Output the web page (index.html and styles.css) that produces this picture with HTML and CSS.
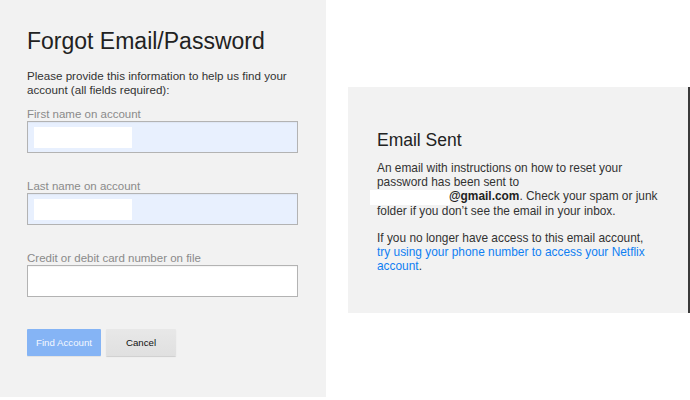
FILE: index.html
```html
<!DOCTYPE html>
<html>
<head>
<meta charset="utf-8">
<link rel="stylesheet" href="styles.css">
</head>
<body>
<div class="page">
  <section class="left">
    <h1 class="title">Forgot Email/Password</h1>
    <p class="intro">Please provide this information to help us find your account (all fields required):</p>
    <div class="field">
      <div class="label">First name on account</div>
      <div class="input filled"><span class="mask"></span></div>
    </div>
    <div class="field">
      <div class="label">Last name on account</div>
      <div class="input filled"><span class="mask"></span></div>
    </div>
    <div class="field">
      <div class="label">Credit or debit card number on file</div>
      <div class="input"></div>
    </div>
    <div class="buttons">
      <div class="btn primary">Find Account</div>
      <div class="btn secondary">Cancel</div>
    </div>
  </section>
  <div class="right">
    <section class="card">
      <h2 class="card-title">Email Sent</h2>
      <p class="msg">An email with instructions on how to reset your password has been sent to<br><span class="mask-inline"></span><b>@gmail.com</b>. Check your spam or junk folder if you don’t see the email in your inbox.</p>
      <p class="msg">If you no longer have access to this email account,<br><a class="link" href="#">try using your phone number to access your Netflix account</a>.</p>
    </section>
  </div>
</div>
</body>
</html>
```

FILE: styles.css
```css
html, body {
  margin: 0;
  padding: 0;
  background: #ffffff;
}
body {
  font-family: "Liberation Sans", Arial, Helvetica, sans-serif;
  color: #333333;
}
.page {
  display: flex;
  align-items: flex-start;
}
.left {
  width: 326px;
  height: 397px;
  box-sizing: border-box;
  background: #f2f2f2;
  padding: 27px 0 0 27px;
}
.title {
  margin: 0;
  font-size: 23px;
  line-height: 28px;
  font-weight: normal;
  color: #222222;
}
.intro {
  width: 271px;
  margin: 14px 0 10px 0;
  font-size: 11.6px;
  line-height: 14px;
  color: #333333;
}
.field {
  margin-bottom: 26px;
}
.label {
  font-size: 11.5px;
  line-height: 14px;
  color: #8a8a8a;
}
.input {
  width: 271px;
  height: 32px;
  box-sizing: border-box;
  background: #ffffff;
  border: 1px solid #b3b3b3;
  box-shadow: inset 0 1px 1px rgba(0,0,0,0.04);
  padding: 5px 6px;
}
.input.filled {
  background: #e8f0fe;
}
.mask {
  display: block;
  width: 98px;
  height: 21px;
  background: #ffffff;
}
.buttons {
  display: flex;
  gap: 5px;
  margin-top: 32px;
}
.btn {
  height: 27px;
  box-sizing: border-box;
  display: flex;
  align-items: center;
  justify-content: center;
  font-size: 9.7px;
  border-radius: 1px;
}
.btn.primary {
  width: 74px;
  background: #85b4f5;
  color: #f4f8ff;
  box-shadow: 0 1px 0 rgba(0,0,0,0.06);
}
.btn.secondary {
  width: 70px;
  background: linear-gradient(#e8e8e8, #e0e0e0);
  color: #111111;
  box-shadow: 0 1px 1px rgba(0,0,0,0.15);
}
.right {
  margin-left: 22px;
  margin-top: 87px;
}
.card {
  width: 342px;
  height: 226px;
  box-sizing: border-box;
  background: #f2f2f2;
  border-right: 2px solid #3a3a3a;
  padding: 43px 20px 0 29px;
}
.card-title {
  margin: 0 0 11px 0;
  font-size: 17.5px;
  line-height: 20px;
  font-weight: normal;
  color: #222222;
}
.msg {
  margin: 0 0 13px 0;
  font-size: 11.9px;
  line-height: 14.2px;
  color: #333333;
}
.msg b {
  color: #222222;
}
.mask-inline {
  display: inline-block;
  width: 80px;
  height: 15px;
  background: #ffffff;
  margin: 0 -1px -5px -7px;
}
.link {
  color: #0f7ff2;
  text-decoration: none;
}
```
